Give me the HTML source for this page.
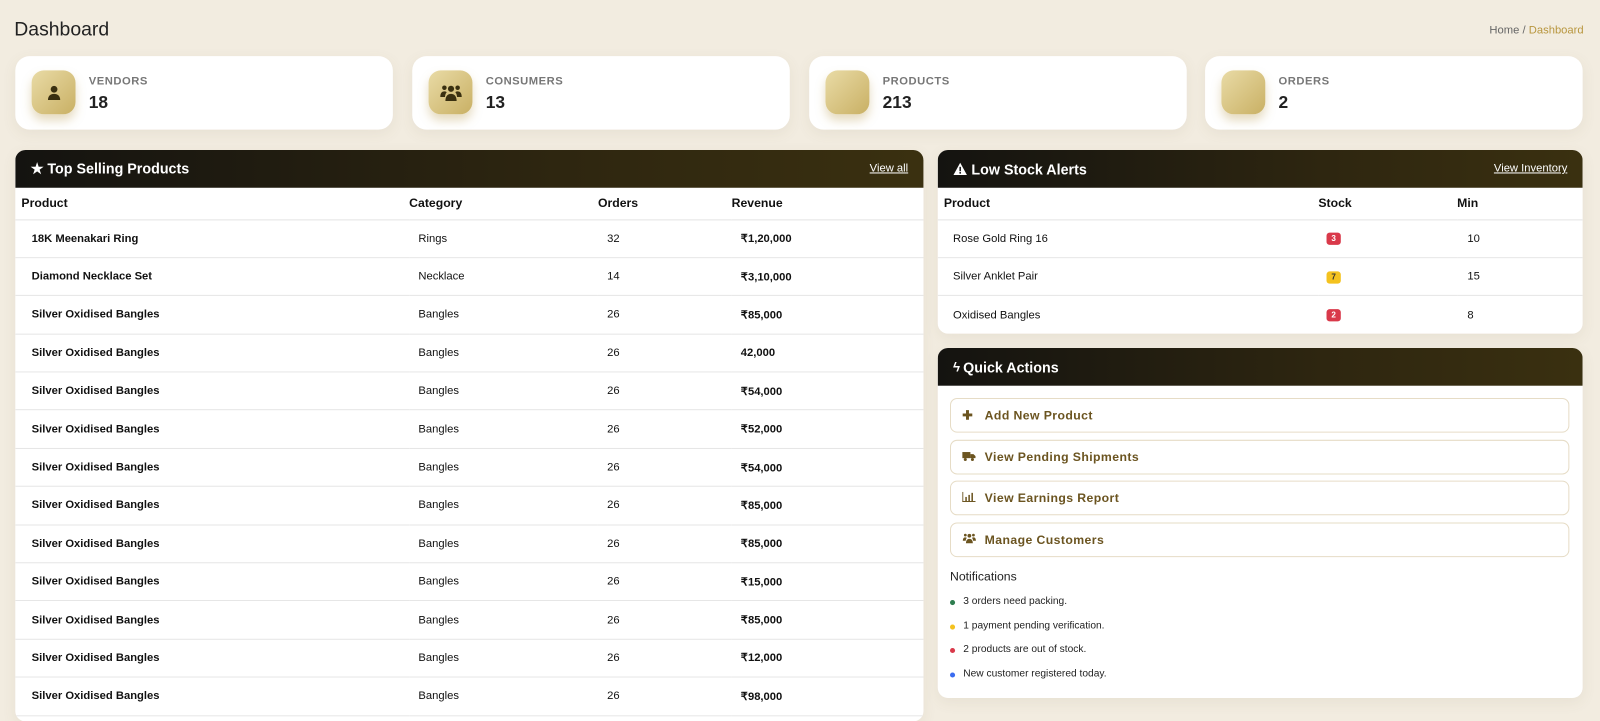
<!DOCTYPE html>
<html><head><meta charset="utf-8"><style>
*{box-sizing:border-box;margin:0;padding:0}
body{width:1600px;height:713px;overflow:hidden;background:#f2ece0;font-family:"Liberation Sans",Arial,sans-serif;color:#111;position:relative}
#w{position:absolute;left:0;top:0;width:1568px;height:700px;transform:scale(1.0204);transform-origin:0 0}
.abs{position:absolute}
h1{position:absolute;left:14px;top:19px;font-size:19px;font-weight:400;color:#222}
.bc{position:absolute;right:16px;top:24px;font-size:11px;color:#666}
.bc span{color:#b8963e}
.card{position:absolute;top:55px;width:370px;height:72px;background:#fff;border-radius:14px;box-shadow:0 4px 14px rgba(120,100,60,.08)}
.ic{position:absolute;left:16px;top:14px;width:43px;height:43px;border-radius:12px;background:linear-gradient(135deg,#e9dba6,#c9b064);box-shadow:0 6px 10px rgba(180,150,70,.35);display:flex;align-items:center;justify-content:center}
.lbl{position:absolute;left:72px;top:19px;font-size:11px;font-weight:700;color:#777;letter-spacing:.5px}
.val{position:absolute;left:72px;top:36px;font-size:17px;font-weight:700;color:#222}
.panel{position:absolute;background:#fff;border-radius:10px;overflow:hidden;box-shadow:0 4px 14px rgba(120,100,60,.08)}
.ph{height:37px;background:linear-gradient(90deg,#141310,#2e2610 60%,#3a3010);color:#fff;font-weight:700;font-size:14px;display:flex;align-items:center;padding:0 15px;position:relative}
.ph a{position:absolute;right:15px;top:12px;font-size:11px;color:#fff;text-decoration:underline;font-weight:400}
table{border-collapse:collapse;width:100%;font-size:11px}
th{text-align:left;font-weight:700;font-size:12px;height:31px;padding:0;border-bottom:1px solid #e3e3e3}
td{height:37.4px;padding:0;border-bottom:1px solid #e6e6e6}
.bold td:first-child{font-weight:700}
.badge{display:inline-block;width:14px;height:12px;border-radius:3px;color:#fff;font-size:8px;text-align:center;line-height:12px;font-weight:700}
.btn{position:absolute;left:12px;width:607px;height:34px;border:1.5px solid #e6dcc6;border-radius:7px;font-size:12px;font-weight:700;color:#6b5420;letter-spacing:.4px;display:flex;align-items:center;padding-left:11px}
.btn i{font-style:normal;width:22px;display:inline-block;color:#6b5420}
.nt{position:absolute;left:25px;font-size:10px;color:#222}
.dot{position:absolute;left:-13px;top:4px;width:5px;height:5px;border-radius:50%}
</style></head><body><div id="w">
<h1>Dashboard</h1>
<div class="bc">Home / <span>Dashboard</span></div>

<div class="card" style="left:15px"><div class="ic"><svg width="16" height="16" viewBox="0 0 16 16" fill="#3a3010"><circle cx="8" cy="4.5" r="3.3"/><path d="M2 15c0-4 2.5-6 6-6s6 2 6 6z"/></svg></div><div class="lbl">VENDORS</div><div class="val">18</div></div>
<div class="card" style="left:404px"><div class="ic"><svg width="22" height="18" viewBox="0 0 22 18" fill="#3a3010"><circle cx="11" cy="5" r="3"/><circle cx="4.5" cy="4" r="2.2"/><circle cx="17.5" cy="4" r="2.2"/><path d="M5.5 17c0-5 2.5-7 5.5-7s5.5 2 5.5 7z"/><path d="M0.5 13c0-4 1.7-5.5 4-5.5 1 0 1.8.3 2.3.8-1 1.2-1.5 2.6-1.7 4.7z"/><path d="M21.5 13c0-4-1.7-5.5-4-5.5-1 0-1.8.3-2.3.8 1 1.2 1.5 2.6 1.7 4.7z"/></svg></div><div class="lbl">CONSUMERS</div><div class="val">13</div></div>
<div class="card" style="left:793px"><div class="ic"></div><div class="lbl">PRODUCTS</div><div class="val">213</div></div>
<div class="card" style="left:1181px"><div class="ic"></div><div class="lbl">ORDERS</div><div class="val">2</div></div>

<div class="panel" style="left:15px;top:147px;width:890px;height:560px">
<div class="ph">★&nbsp;Top Selling Products<a>View all</a></div>
<table class="bold">
<colgroup><col style="width:386px"><col style="width:185px"><col style="width:131px"><col></colgroup>
<tr><th style="padding-left:6px">Product</th><th>Category</th><th>Orders</th><th>Revenue</th></tr>
<tbody>
<tr><td style="padding-left:16px">18K Meenakari Ring</td><td style="padding-left:9px">Rings</td><td style="padding-left:9px">32</td><td style="padding-left:9px;font-weight:700">₹1,20,000</td></tr>
<tr><td style="padding-left:16px">Diamond Necklace Set</td><td style="padding-left:9px">Necklace</td><td style="padding-left:9px">14</td><td style="padding-left:9px;font-weight:700">₹3,10,000</td></tr>
<tr><td style="padding-left:16px">Silver Oxidised Bangles</td><td style="padding-left:9px">Bangles</td><td style="padding-left:9px">26</td><td style="padding-left:9px;font-weight:700">₹85,000</td></tr>
<tr><td style="padding-left:16px">Silver Oxidised Bangles</td><td style="padding-left:9px">Bangles</td><td style="padding-left:9px">26</td><td style="padding-left:9px;font-weight:700">42,000</td></tr>
<tr><td style="padding-left:16px">Silver Oxidised Bangles</td><td style="padding-left:9px">Bangles</td><td style="padding-left:9px">26</td><td style="padding-left:9px;font-weight:700">₹54,000</td></tr>
<tr><td style="padding-left:16px">Silver Oxidised Bangles</td><td style="padding-left:9px">Bangles</td><td style="padding-left:9px">26</td><td style="padding-left:9px;font-weight:700">₹52,000</td></tr>
<tr><td style="padding-left:16px">Silver Oxidised Bangles</td><td style="padding-left:9px">Bangles</td><td style="padding-left:9px">26</td><td style="padding-left:9px;font-weight:700">₹54,000</td></tr>
<tr><td style="padding-left:16px">Silver Oxidised Bangles</td><td style="padding-left:9px">Bangles</td><td style="padding-left:9px">26</td><td style="padding-left:9px;font-weight:700">₹85,000</td></tr>
<tr><td style="padding-left:16px">Silver Oxidised Bangles</td><td style="padding-left:9px">Bangles</td><td style="padding-left:9px">26</td><td style="padding-left:9px;font-weight:700">₹85,000</td></tr>
<tr><td style="padding-left:16px">Silver Oxidised Bangles</td><td style="padding-left:9px">Bangles</td><td style="padding-left:9px">26</td><td style="padding-left:9px;font-weight:700">₹15,000</td></tr>
<tr><td style="padding-left:16px">Silver Oxidised Bangles</td><td style="padding-left:9px">Bangles</td><td style="padding-left:9px">26</td><td style="padding-left:9px;font-weight:700">₹85,000</td></tr>
<tr><td style="padding-left:16px">Silver Oxidised Bangles</td><td style="padding-left:9px">Bangles</td><td style="padding-left:9px">26</td><td style="padding-left:9px;font-weight:700">₹12,000</td></tr>
<tr><td style="padding-left:16px">Silver Oxidised Bangles</td><td style="padding-left:9px">Bangles</td><td style="padding-left:9px">26</td><td style="padding-left:9px;font-weight:700">₹98,000</td></tr>
</tbody></table>
</div>

<div class="panel" style="left:919px;top:147px;width:632px;height:180px">
<div class="ph"><svg width="14" height="13" viewBox="0 0 14 13" style="margin-right:4px"><path d="M7 0.5L13.6 12.5H0.4Z" fill="#fff"/><rect x="6.2" y="4.5" width="1.6" height="4.3" fill="#222"/><rect x="6.2" y="9.6" width="1.6" height="1.6" fill="#222"/></svg>Low Stock Alerts<a>View Inventory</a></div>
<table>
<colgroup><col style="width:373px"><col style="width:136px"><col></colgroup>
<tr><th style="padding-left:6px">Product</th><th>Stock</th><th>Min</th></tr>
<tr><td style="padding-left:15px">Rose Gold Ring 16</td><td style="padding-left:8px"><span class="badge" style="background:#d9394a">3</span></td><td style="padding-left:10px">10</td></tr>
<tr><td style="padding-left:15px">Silver Anklet Pair</td><td style="padding-left:8px"><span class="badge" style="background:#f4c21f;color:#333">7</span></td><td style="padding-left:10px">15</td></tr>
<tr><td style="padding-left:15px;border:0">Oxidised Bangles</td><td style="padding-left:8px;border:0"><span class="badge" style="background:#d9394a">2</span></td><td style="padding-left:10px;border:0">8</td></tr>
</table>
</div>

<div class="panel" style="left:919px;top:341px;width:632px;height:343px">
<div class="ph"><span style="font-size:13px;margin-right:3px">ϟ</span>Quick Actions</div>
<div class="btn" style="top:49px"><i>✚</i>Add New Product</div>
<div class="btn" style="top:90px"><i><svg width="13" height="10" viewBox="0 0 13 10" fill="#6b5420"><rect x="0" y="1" width="8" height="6"/><path d="M8 3h3l2 2v2H8z"/><circle cx="3" cy="8.3" r="1.5"/><circle cx="10" cy="8.3" r="1.5"/></svg></i>View Pending Shipments</div>
<div class="btn" style="top:130px"><i><svg width="13" height="10" viewBox="0 0 13 10" fill="#6b5420"><rect x="0" y="0" width="1" height="10"/><rect x="0" y="9" width="13" height="1"/><rect x="3" y="5" width="1.5" height="4"/><rect x="6" y="3" width="1.5" height="6"/><rect x="9" y="1" width="1.5" height="8"/></svg></i>View Earnings Report</div>
<div class="btn" style="top:171px"><i><svg width="14" height="11" viewBox="0 0 22 18" fill="#6b5420"><circle cx="11" cy="5" r="3"/><circle cx="4.5" cy="4" r="2.2"/><circle cx="17.5" cy="4" r="2.2"/><path d="M5.5 17c0-5 2.5-7 5.5-7s5.5 2 5.5 7z"/><path d="M0.5 13c0-4 1.7-5.5 4-5.5 1 0 1.8.3 2.3.8-1 1.2-1.5 2.6-1.7 4.7z"/><path d="M21.5 13c0-4-1.7-5.5-4-5.5-1 0-1.8.3-2.3.8 1 1.2 1.5 2.6 1.7 4.7z"/></svg></i>Manage Customers</div>
<div class="abs" style="left:12px;top:217px;font-size:12px;color:#222">Notifications</div>
<div class="nt" style="top:243px"><span class="dot" style="background:#2e7d4f"></span>3 orders need packing.</div>
<div class="nt" style="top:267px"><span class="dot" style="background:#f4c21f"></span>1 payment pending verification.</div>
<div class="nt" style="top:290px"><span class="dot" style="background:#d9394a"></span>2 products are out of stock.</div>
<div class="nt" style="top:314px"><span class="dot" style="background:#3b6cf0"></span>New customer registered today.</div>
</div>
</div></body></html>
